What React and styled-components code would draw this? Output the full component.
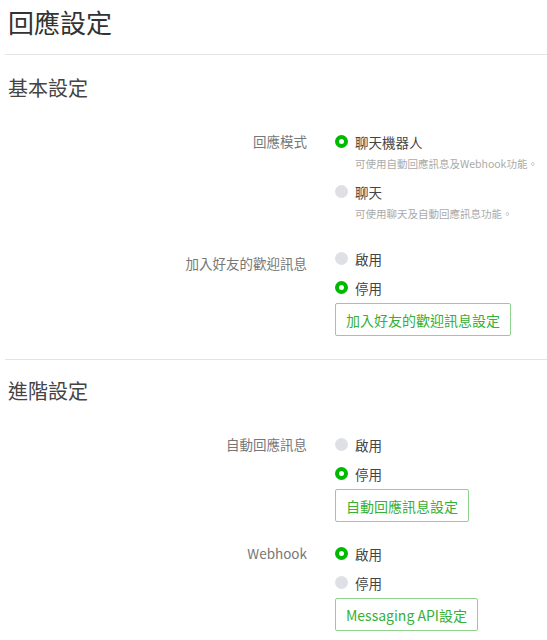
import styled, { createGlobalStyle } from 'styled-components';

const GlobalStyle = createGlobalStyle`
  body {
    margin: 0;
    background: #fff;
    font-family: "Noto Sans CJK TC", "Liberation Sans", sans-serif;
    color: #333;
  }
`;

const Page = styled.div`
  width: 547px;
  padding: 5px 0 0 5px;
  box-sizing: border-box;
`;

const Title = styled.h1`
  margin: 0;
  padding-left: 3px;
  font-size: 26px;
  line-height: 34px;
  font-weight: 400;
  color: #333;
`;

const Divider = styled.hr`
  margin: ${({ $top }) => $top}px 0 0 0;
  border: 0;
  border-top: 1px solid #e3e3e3;
`;

const Heading = styled.h2`
  margin: ${({ $top }) => $top}px 0 0 0;
  padding-left: 3px;
  font-size: 20px;
  line-height: 28px;
  font-weight: 400;
  color: #444;
`;

const Rows = styled.div`
  display: flex;
  flex-direction: column;
  gap: 17px;
  margin-top: 25px;
`;

const Row = styled.div`
  display: grid;
  grid-template-columns: 302px 1fr;
  column-gap: 28px;
`;

const Label = styled.div`
  text-align: right;
  font-size: 13.5px;
  line-height: 29px;
  color: #777;
  padding-top: ${({ $offset }) => $offset || 0}px;
`;

const Options = styled.div`
  display: flex;
  flex-direction: column;
  align-items: flex-start;
`;

const Option = styled.div`
  display: flex;
  flex-direction: column;
  padding-bottom: 5px;
`;

const RadioLine = styled.div`
  display: flex;
  align-items: center;
  gap: 7px;
  height: 29px;
  font-size: 13.5px;
  color: #444;
`;

const Dot = styled.span`
  width: 13px;
  height: 13px;
  border-radius: 50%;
  box-sizing: border-box;
  background: ${({ $on }) => ($on ? '#fff' : '#dfe0e6')};
  border: ${({ $on }) => ($on ? '4px solid #00b900' : 'none')};
`;

const Desc = styled.div`
  padding-left: 20px;
  font-size: 10.5px;
  line-height: 16px;
  color: #aaa;
`;

const Button = styled.button`
  margin-top: 1px;
  height: 33px;
  padding: 0 10px;
  background: #fff;
  border: 1px solid #8fd18f;
  border-radius: 2px;
  color: #36b036;
  font-family: inherit;
  font-size: 14px;
  cursor: pointer;
`;

function Radio({ on, children }) {
  return (
    <RadioLine>
      <Dot $on={on} />
      {children}
    </RadioLine>
  );
}

export default function App() {
  return (
    <Page>
      <GlobalStyle />
      <Title>回應設定</Title>
      <Divider $top={15} />

      <Heading $top={19}>基本設定</Heading>
      <Rows>
        <Row>
          <Label>回應模式</Label>
          <Options>
            <Option>
              <Radio on>聊天機器人</Radio>
              <Desc>可使用自動回應訊息及Webhook功能。</Desc>
            </Option>
            <Option>
              <Radio>聊天</Radio>
              <Desc>可使用聊天及自動回應訊息功能。</Desc>
            </Option>
          </Options>
        </Row>
        <Row>
          <Label $offset={5}>加入好友的歡迎訊息</Label>
          <Options>
            <Radio>啟用</Radio>
            <Radio on>停用</Radio>
            <Button>加入好友的歡迎訊息設定</Button>
          </Options>
        </Row>
      </Rows>

      <Divider $top={23} />

      <Heading $top={17}>進階設定</Heading>
      <Rows>
        <Row>
          <Label>自動回應訊息</Label>
          <Options>
            <Radio>啟用</Radio>
            <Radio on>停用</Radio>
            <Button>自動回應訊息設定</Button>
          </Options>
        </Row>
        <Row>
          <Label>Webhook</Label>
          <Options>
            <Radio on>啟用</Radio>
            <Radio>停用</Radio>
            <Button>Messaging API設定</Button>
          </Options>
        </Row>
      </Rows>
    </Page>
  );
}
